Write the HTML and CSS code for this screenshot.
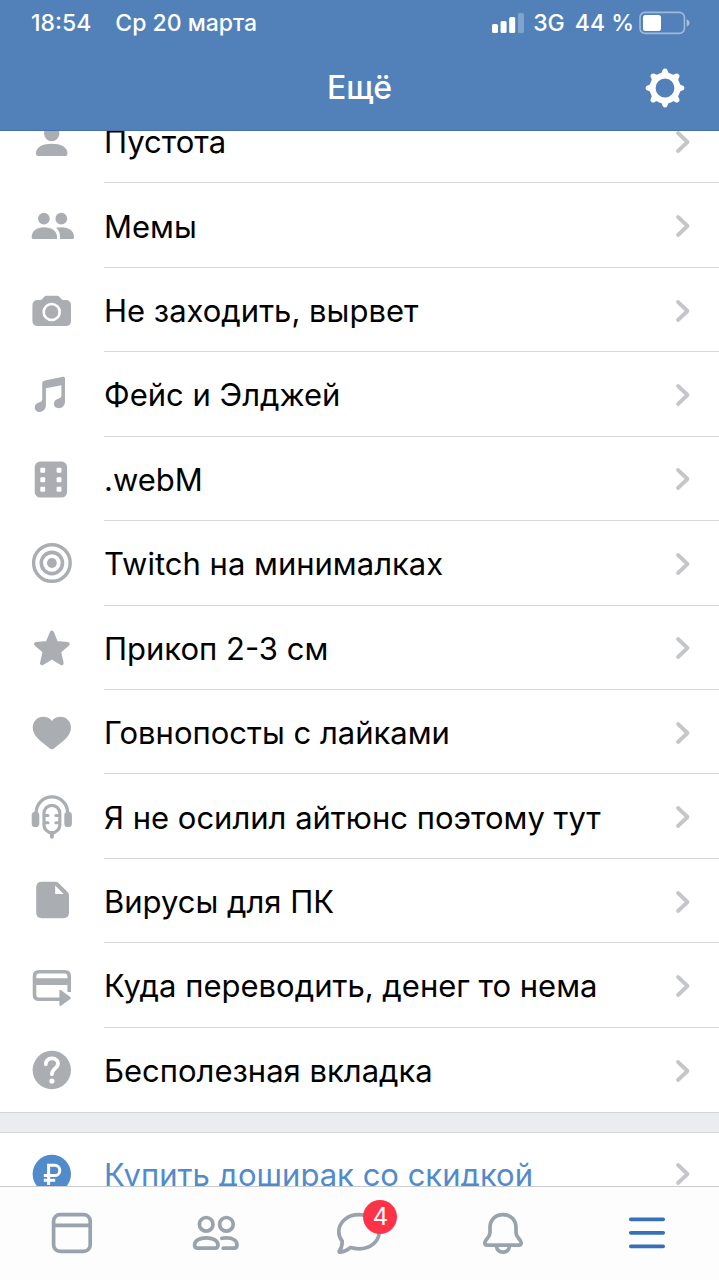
FILE: index.html
```html
<!DOCTYPE html>
<html lang="ru">
<head>
<meta charset="utf-8">
<meta name="viewport" content="width=device-width, initial-scale=1">
<title>Ещё</title>
<link rel="stylesheet" href="styles.css">
</head>
<body>
<div class="app">
  <svg class="defs" aria-hidden="true">
    <symbol id="chevron" viewBox="0 0 16 26"><path d="M3 4 L12.5 13 L3 22" fill="none" stroke="currentColor" stroke-width="3.8" stroke-linecap="round" stroke-linejoin="round"/></symbol>
  </svg>

  <header class="header">
    <div class="status">
      <span class="status-time">18:54</span>
      <span class="status-date">Ср 20 марта</span>
      <svg class="signal" viewBox="0 0 32 20" aria-hidden="true">
        <rect x="0" y="11" width="6" height="9" rx="1.6"/><rect x="8.6" y="8" width="6" height="12" rx="1.6"/><rect x="17.2" y="4" width="6" height="16" rx="1.6"/><rect x="26" y="0" width="6" height="20" rx="1.6" opacity=".28"/>
      </svg>
      <span class="status-net">3G</span>
      <span class="status-charge">44 %</span>
      <svg class="battery" viewBox="0 0 52 24" aria-hidden="true">
        <rect x="1" y="1.4" width="44.4" height="21" rx="5" fill="none" stroke="#fff" stroke-opacity=".45" stroke-width="1.6"/>
        <rect x="4" y="4" width="18" height="16" rx="2.5"/>
        <path d="M47.6 8.2 Q50.6 9.4 50.6 12 T47.6 15.8Z" opacity=".5"/>
      </svg>
    </div>
    <div class="nav">
      <h1 class="title">Ещё</h1>
      <button class="settings" type="button" aria-label="Настройки">
        <svg viewBox="0 0 40 40" aria-hidden="true">
          <circle cx="20" cy="20" r="12.4" fill="none" stroke="#fff" stroke-width="6"/>
          <g fill="#fff">
            <path id="tooth" d="M13.6 7 Q17 5.6 17.4 2.6 Q17.8 .6 20 .6 Q22.2 .6 22.6 2.6 Q23 5.6 26.4 7 L24 9 H16Z"/>
            <use href="#tooth" transform="rotate(45 20 20)"/><use href="#tooth" transform="rotate(90 20 20)"/><use href="#tooth" transform="rotate(135 20 20)"/><use href="#tooth" transform="rotate(180 20 20)"/><use href="#tooth" transform="rotate(225 20 20)"/><use href="#tooth" transform="rotate(270 20 20)"/><use href="#tooth" transform="rotate(315 20 20)"/>
          </g>
        </svg>
      </button>
    </div>
  </header>

  <main class="content">
    <div class="menu">
      <a class="row" href="#"><svg class="icon" viewBox="0 0 48 48"><circle cx="23.7" cy="16.5" r="7.7"/><path d="M8 36 C8 30 15 26.8 23.7 26.8 S39.4 30 39.4 36 V37 Q39.4 39 37.4 39 H10 Q8 39 8 37Z"/></svg><span class="label">Пустота<svg class="chevron"><use href="#chevron"/></svg></span></a>
      <a class="row" href="#"><svg class="icon" viewBox="0 0 48 48"><circle cx="15.9" cy="16.7" r="5.9"/><circle cx="33.3" cy="16.7" r="5.9"/><path d="M3.7 34.6 C3.7 29 9 25.2 16 25.2 C23.5 25.2 29 29 29 34.6 V37 H5.2 Q3.7 37 3.7 35.5Z"/><path d="M28 25.8 Q30.5 25.2 33 25.2 C41 25.2 46 29 46 34.6 V35.5 Q46 37 44.5 37 H31.9 V34.6 Q31.9 29 28 25.8Z"/></svg><span class="label">Мемы<svg class="chevron"><use href="#chevron"/></svg></span></a>
      <a class="row" href="#"><svg class="icon" viewBox="0 0 48 48"><path fill-rule="evenodd" d="M10 14 H12.2 Q13.4 14 14.2 13 L16 10.9 Q17 9.7 18.6 9.7 H28.9 Q30.5 9.7 31.5 10.9 L33.3 13 Q34.1 14 35.3 14 H37.5 Q43 14 43 19.5 V34.5 Q43 40 37.5 40 H10 Q4.4 40 4.4 34.5 V19.5 Q4.4 14 10 14Z M23.7 16.7 A9.3 9.3 0 1 0 23.7 35.3 A9.3 9.3 0 1 0 23.7 16.7Z"/><circle cx="23.7" cy="26" r="6.7"/></svg><span class="label">Не заходить, вырвет<svg class="chevron"><use href="#chevron"/></svg></span></a>
      <a class="row" href="#"><svg class="icon" viewBox="0 0 48 48"><path d="M14.2 13.6 Q14.2 10.9 16.9 10.4 L35 6.8 Q37 6.4 37 8.4 V31.5 C37 35.5 34.3 38.2 30.6 38.2 C27.8 38.2 25.9 36.3 25.9 33.8 C25.9 31 28 29 31 28.5 Q33.4 28 33.4 25.8 V15.2 L17.9 18.2 V35.6 C17.9 39.2 15.2 41.9 11.6 41.9 C8.7 41.9 6.7 40 6.7 37.4 C6.7 34.7 8.8 32.8 11.7 32.2 Q14.2 31.7 14.2 29.4Z"/></svg><span class="label">Фейс и Элджей<svg class="chevron"><use href="#chevron"/></svg></span></a>
      <a class="row" href="#"><svg class="icon" viewBox="0 0 48 48"><rect x="6.7" y="6.6" width="32.4" height="36" rx="5.5"/><g fill="#fff"><rect x="12.3" y="12.8" width="4.9" height="4.9" rx="1"/><rect x="28.6" y="12.8" width="4.9" height="4.9" rx="1"/><rect x="12.3" y="22.3" width="4.9" height="4.9" rx="1"/><rect x="28.6" y="22.3" width="4.9" height="4.9" rx="1"/><rect x="12.3" y="31.8" width="4.9" height="4.9" rx="1"/><rect x="28.6" y="31.8" width="4.9" height="4.9" rx="1"/></g></svg><span class="label">.webM<svg class="chevron"><use href="#chevron"/></svg></span></a>
      <a class="row" href="#"><svg class="icon" viewBox="0 0 48 48"><circle cx="23.9" cy="24" r="18.3" fill="none" stroke="currentColor" stroke-width="3.4"/><circle cx="23.9" cy="24" r="10.6" fill="none" stroke="currentColor" stroke-width="3.6"/><circle cx="23.9" cy="24" r="4.9"/></svg><span class="label">Twitch на минималках<svg class="chevron"><use href="#chevron"/></svg></span></a>
      <a class="row" href="#"><svg class="icon" viewBox="0 0 48 48"><path stroke="currentColor" stroke-width="4" stroke-linejoin="round" d="M23.9 8.5 L28.2 19 L39.7 20 L31 27.5 L33.7 39.2 L23.9 33.2 L14 39.2 L16.7 27.5 L8 20 L19.5 19Z"/></svg><span class="label">Прикоп 2-3 см<svg class="chevron"><use href="#chevron"/></svg></span></a>
      <a class="row" href="#"><svg class="icon" viewBox="0 0 48 48"><path d="M23.9 13 C26 10 29.2 8.7 32.4 8.7 C38.5 8.7 43 13.6 43 19.6 C43 28 35 33.5 26 40.4 Q23.9 42 21.8 40.4 C12.8 33.5 4.7 28 4.7 19.6 C4.7 13.6 9.3 8.7 15.4 8.7 C18.6 8.7 21.8 10 23.9 13Z"/></svg><span class="label">Говнопосты с лайками<svg class="chevron"><use href="#chevron"/></svg></span></a>
      <a class="row" href="#"><svg class="icon" viewBox="0 0 48 48"><g fill="none" stroke="currentColor" stroke-width="3.2" stroke-linecap="round"><path d="M8.2 21 V19.6 A15.7 15.7 0 0 1 39.6 19.6 V21"/><rect x="16" y="12.4" width="15.8" height="27.4" rx="7.9"/><path d="M17 22.6 H20 M17 29.8 H20 M27.8 22.6 H31 M27.8 29.8 H31" stroke-width="3"/><path d="M23.9 40 V43.8" stroke-width="4"/></g><rect x="3.7" y="18.8" width="7.6" height="15.2" rx="3.6"/><rect x="36.3" y="18.8" width="7.6" height="15.2" rx="3.6"/></svg><span class="label">Я не осилил айтюнс поэтому тут<svg class="chevron"><use href="#chevron"/></svg></span></a>
      <a class="row" href="#"><svg class="icon" viewBox="0 0 48 48"><path fill-rule="evenodd" d="M14 4.8 H27.4 Q29.4 4.8 30.8 6.2 L39.4 14.8 Q41 16.4 41 18.6 V35.5 Q41 41.2 35.3 41.2 H14 Q8.2 41.2 8.2 35.5 V10.5 Q8.2 4.8 14 4.8Z M27.2 8.6 V16.9 H35.6Z"/></svg><span class="label">Вирусы для ПК<svg class="chevron"><use href="#chevron"/></svg></span></a>
      <a class="row" href="#"><svg class="icon" viewBox="0 0 48 48"><path fill="none" stroke="currentColor" stroke-width="3.6" d="M32 38.3 H11 Q6.5 38.3 6.5 33.8 V15.2 Q6.5 10.8 11 10.8 H36.8 Q41.2 10.8 41.2 15.2 V31"/><path d="M6 17.2 H42 V24 H6Z"/><path d="M31.4 30 Q31.4 28.2 33 29.2 L42.3 36 Q43.6 37 42.3 38 L33 44.8 Q31.4 45.8 31.4 44Z"/></svg><span class="label">Куда переводить, денег то нема<svg class="chevron"><use href="#chevron"/></svg></span></a>
      <a class="row" href="#"><svg class="icon" viewBox="0 0 48 48"><circle cx="23.8" cy="24" r="19.2"/><path fill="none" stroke="#fff" stroke-width="3.8" stroke-linecap="round" d="M17.8 18.2 C18.2 14.4 20.6 12.4 24 12.4 C27.6 12.4 30 14.7 30 17.8 C30 22.4 23.9 22.6 23.9 28.2"/><circle cx="23.9" cy="35" r="2.6" fill="#fff"/></svg><span class="label">Бесполезная вкладка<svg class="chevron"><use href="#chevron"/></svg></span></a>
    </div>
    <div class="promo">
      <a class="row row-accent" href="#"><svg class="icon" viewBox="0 0 48 48"><circle cx="23.8" cy="24" r="19.2"/><path fill="none" stroke="#fff" stroke-width="3" d="M20.6 35 V15.2 H26.6 A5.2 5.2 0 0 1 26.6 25.6 H15.8 M15.8 30.2 H27.2"/></svg><span class="label">Купить доширак со скидкой<svg class="chevron"><use href="#chevron"/></svg></span></a>
    </div>
  </main>

  <nav class="tabs">
    <button class="tab" type="button" aria-label="Новости"><svg viewBox="0 0 48 48"><rect x="5.6" y="5.6" width="36.6" height="36.8" rx="6.5"/><path d="M6 16.4 H42"/></svg></button>
    <button class="tab" type="button" aria-label="Друзья"><svg viewBox="0 0 48 48"><circle cx="14.2" cy="15.3" r="6.8"/><circle cx="34.4" cy="15.3" r="6.8"/><path d="M2.6 36 C2.6 31.5 8 28.8 14.3 28.8 S26 31.5 26 36 Q26 39.2 23 39.2 H5.6 Q2.6 39.2 2.6 36Z"/><path d="M29.8 29.3 Q32 28.8 34.4 28.8 C40.5 28.8 45 31.5 45 36 Q45 39.2 42 39.2 H31.2" stroke-linecap="round"/></svg></button>
    <button class="tab" type="button" aria-label="Сообщения, 4 новых"><svg viewBox="0 0 48 48"><path stroke-linejoin="round" d="M24 5.7 C12.5 5.7 3.8 13 3.8 22.7 C3.8 26.5 5 29.5 7.2 32.2 C7.3 36 6.4 39.2 4.3 42 Q3.5 43.4 5.2 43.2 C9 42.8 12.5 41 15.3 38.6 C18 39.4 21 39.8 24 39.8 C35.5 39.8 44.2 32.4 44.2 22.7 C44.2 13 35.5 5.7 24 5.7Z"/></svg><span class="badge">4</span></button>
    <button class="tab" type="button" aria-label="Уведомления"><svg viewBox="0 0 48 48"><path stroke-linejoin="round" d="M8.3 36.2 Q5.8 36.2 5.8 33.8 C5.8 30.5 11 28.6 11 23.8 V18.6 C11 11 16.2 5.6 24 5.6 S37 11 37 18.6 V23.8 C37 28.6 42.2 30.5 42.2 33.8 Q42.2 36.2 39.7 36.2Z"/><path d="M17.4 37 C18 41 20.6 43.2 24 43.2 S30 41 30.6 37"/></svg></button>
    <button class="tab tab-active" type="button" aria-label="Ещё"><svg viewBox="0 0 48 48"><path stroke-linecap="round" d="M7.8 10.3 H40.2 M7.8 23.8 H40.2 M7.8 37.3 H40.2"/></svg></button>
  </nav>
</div>
</body>
</html>
```
FILE: styles.css
```css
* { box-sizing: border-box; }

body {
  margin: 0;
  font-family: Inter, "Noto Sans", sans-serif;
  color: #000;
  background: #fff;
}

button {
  padding: 0;
  border: 0;
  background: none;
  color: inherit;
  font: inherit;
}

svg { display: block; }

.defs {
  position: absolute;
  width: 0;
  height: 0;
}

.app {
  display: flex;
  flex-direction: column;
  height: 100vh;
}

.header {
  flex: none;
  color: #fff;
  background: #5181b8;
  border-bottom: 1px solid #4672aa;
}

.status {
  display: flex;
  align-items: center;
  height: 46px;
  padding: 0 28px 0 31px;
  font-size: 23px;
  font-weight: 500;
  white-space: nowrap;
}

.status-date { margin-left: 24px; }

.signal {
  width: 32px;
  height: 20px;
  margin-left: auto;
  fill: #fff;
}

.status-net { margin-left: 9px; }
.status-charge { margin-left: 10px; }

.battery {
  width: 52px;
  height: 24px;
  margin-left: 5px;
  fill: #fff;
}

.nav {
  display: grid;
  grid-template-columns: 1fr auto 1fr;
  align-items: center;
  height: 84px;
  padding: 0 34px;
}

.title {
  grid-column: 2;
  margin: 0;
  padding-bottom: 2px;
  font-size: 32px;
  font-weight: 500;
}

.settings {
  justify-self: end;
  width: 40px;
  height: 40px;
}

.content {
  display: flex;
  flex: 1;
  flex-direction: column;
  min-height: 0;
  overflow: hidden;
}

/* The list is scrolled a little way under the header. */
.menu {
  display: flex;
  flex: 1 0 auto;
  flex-direction: column;
  margin-top: -32px;
  border-bottom: 1px solid #d5d6d9;
}

.row {
  display: flex;
  flex: 1 0 auto;
  align-items: center;
  min-height: 84px;
  padding-left: 28px;
  gap: 28px;
  color: #000;
  font-size: 31px;
  text-decoration: none;
}

.icon {
  flex: none;
  width: 48px;
  height: 48px;
  color: #aaaeb3;
  fill: currentColor;
}

.label {
  display: flex;
  flex: 1;
  align-items: center;
  justify-content: space-between;
  align-self: stretch;
  padding: 2px 28px 0 0;
  border-bottom: 1px solid #d7d8d9;
  white-space: nowrap;
}

.row:last-child .label { border-bottom: 0; }

.chevron {
  flex: none;
  width: 16px;
  height: 26px;
  color: #c4c6c9;
}

.promo {
  flex: none;
  height: 73px;
  border-top: 19px solid #ebecf0;
}

.row-accent,
.row-accent .icon { color: #528bcc; }

.promo .row {
  min-height: 83px;
  border-top: 1px solid #d5d6d9;
}

.promo .label { padding-top: 0; }

.tabs {
  display: flex;
  flex: none;
  height: 94px;
  padding-bottom: 2px;
  border-top: 1px solid #c9cbce;
  background: #fdfdfd;
}

.tab {
  position: relative;
  display: flex;
  flex: 1;
  align-items: center;
  justify-content: center;
  color: #99a2ad;
}

.tab svg {
  width: 48px;
  height: 48px;
  fill: none;
  stroke: currentColor;
  stroke-width: 3.7;
}

.tab-active { color: #3770b5; }

.badge {
  position: absolute;
  top: 13px;
  left: calc(50% + 4px);
  width: 34px;
  height: 34px;
  border-radius: 50%;
  background: #ff3347;
  color: #fff;
  font-size: 24px;
  line-height: 34px;
  text-align: center;
}
```
